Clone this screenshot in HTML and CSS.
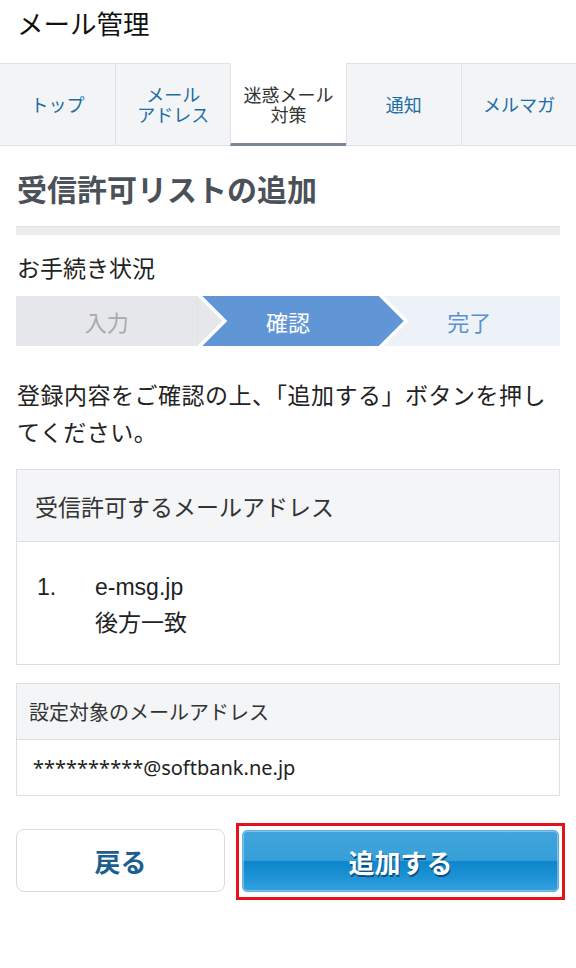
FILE: index.html
```html
<!DOCTYPE html>
<html lang="ja">
<head>
<meta charset="utf-8">
<title>メール管理</title>
<link rel="stylesheet" href="styles.css">
</head>
<body>
<header class="page-title">メール管理</header>
<nav class="tabs">
  <a class="tab">トップ</a>
  <a class="tab">メール<br>アドレス</a>
  <a class="tab tab-active">迷惑メール<br>対策</a>
  <a class="tab">通知</a>
  <a class="tab">メルマガ</a>
</nav>
<main class="content">
  <h1 class="heading">受信許可リストの追加</h1>
  <div class="divider"></div>
  <p class="status-label">お手続き状況</p>
  <div class="steps">
    <div class="step step-done"><span>入力</span></div>
    <div class="step step-current"><span>確認</span></div>
    <div class="step step-next"><span>完了</span></div>
  </div>
  <p class="lead">登録内容をご確認の上、「追加する」ボタンを押してください。</p>
  <section class="box">
    <div class="box-head">受信許可するメールアドレス</div>
    <div class="box-body list-body">
      <div class="entry">
        <span class="entry-num">1.</span>
        <div class="entry-text">
          <div>e-msg.jp</div>
          <div>後方一致</div>
        </div>
      </div>
    </div>
  </section>
  <section class="box box-small">
    <div class="box-head">設定対象のメールアドレス</div>
    <div class="box-body address">**********@softbank.ne.jp</div>
  </section>
  <div class="actions">
    <button class="btn-back">戻る</button>
    <div class="highlight">
      <button class="btn-add">追加する</button>
    </div>
  </div>
</main>
</body>
</html>
```

FILE: styles.css
```css
* { box-sizing: border-box; }
html, body { margin: 0; padding: 0; background: #fff; }
body {
  font-family: "Liberation Sans", "Noto Sans CJK JP", sans-serif;
  color: #222;
  width: 576px;
}
.page-title {
  height: 63px;
  padding: 8px 17px 0;
  font-size: 26.5px;
  line-height: 34px;
  color: #111;
}
.tabs {
  display: grid;
  grid-template-columns: repeat(5, 1fr);
  height: 83px;
}
.tab {
  display: flex;
  align-items: center;
  justify-content: center;
  text-align: center;
  height: 83px;
  background: #f3f4f6;
  border-top: 1px solid #dfe1e4;
  border-bottom: 1px solid #dfe1e4;
  border-left: 1px solid #dfe1e4;
  font-size: 18px;
  line-height: 20px;
  color: #1d6da6;
  padding-top: 2px;
}
.tab:first-child { border-left: none; }
.tab-active {
  background: #fff;
  border-top-color: #fff;
  border-bottom: 3px solid #7b8795;
  color: #333;
  padding-top: 4px;
}
.content { padding: 0 16px; }
.heading {
  margin: 25px 0 0;
  font-size: 30px;
  line-height: 40px;
  font-weight: bold;
  color: #4b5159;
  padding-left: 1px;
}
.divider {
  margin-top: 15px;
  height: 9px;
  background: #ededed;
  border-top: 1px solid #e2e2e2;
}
.status-label {
  margin: 19px 0 0;
  font-size: 23px;
  line-height: 30px;
  color: #222;
  padding-left: 1px;
}
.steps {
  margin-top: 12px;
  display: grid;
  grid-template-columns: repeat(3, 1fr);
  height: 50px;
}
.step {
  position: relative;
  display: flex;
  align-items: center;
  justify-content: center;
  font-size: 22px;
}
.step::before, .step::after {
  content: "";
  position: absolute;
  top: 0;
  left: 100%;
  height: 50px;
}
.step::before {
  width: 30px;
  background: #fff;
  clip-path: polygon(0 0, 5px 0, 30px 25px, 5px 50px, 0 50px);
}
.step::after {
  width: 25px;
  clip-path: polygon(0 0, 25px 25px, 0 50px);
}
.step-done {
  z-index: 3;
  background: #e6e7ea;
  color: #a8aaad;
}
.step-done::after { background: #e6e7ea; }
.step-current {
  z-index: 2;
  background: #6196d6;
  color: #fff;
}
.step-current::after { background: #6196d6; }
.step-next {
  z-index: 1;
  background: #edf2f9;
  color: #5c8fd0;
}
.step-next::before, .step-next::after { display: none; }
.lead {
  margin: 32px 0 0;
  font-size: 23px;
  letter-spacing: 0.5px;
  line-height: 37px;
  color: #222;
  padding-left: 1px;
}
.box {
  margin-top: 17px;
  border: 1px solid #dddfe2;
}
.box-head {
  background: #f4f5f7;
  border-bottom: 1px solid #dddfe2;
  height: 72px;
  display: flex;
  align-items: center;
  padding-left: 18px;
  font-size: 23px;
  color: #333;
}
.list-body {
  padding: 27px 0 23px 20px;
  font-size: 23px;
  line-height: 36px;
}
.entry { display: flex; }
.entry-num { width: 58px; }
.box-small { margin-top: 18px; }
.box-small .box-head {
  height: 56px;
  padding-left: 12px;
  font-size: 20px;
}
.address {
  height: 55px;
  display: flex;
  align-items: center;
  padding-left: 16px;
  font-family: "Noto Sans", "Noto Sans CJK JP", sans-serif;
  font-size: 20px;
  color: #222;
}
.actions {
  margin-top: 27px;
  display: flex;
  align-items: flex-start;
  margin-right: -5px;
}
.btn-back {
  margin-top: 6px;
  width: 209px;
  height: 63px;
  background: #fff;
  border: 1px solid #dcdcdc;
  border-radius: 8px;
  font-family: inherit;
  font-size: 26px;
  font-weight: bold;
  color: #1c5f8f;
  padding: 0;
}
.highlight {
  margin-left: 11px;
  flex: 1;
  border: 3px solid #e1141e;
  padding: 4px 3px 5px;
}
.btn-add {
  display: block;
  width: 100%;
  height: 62px;
  border: 1px solid #5fb1e2;
  border-radius: 5px;
  box-shadow: inset 0 0 0 1px rgba(255,255,255,0.35);
  background: linear-gradient(to bottom, #40a5db 0%, #379fd8 49%, #0d86cb 51%, #1c91d3 75%, #35a2df 100%);
  font-family: inherit;
  font-size: 26px;
  font-weight: bold;
  color: #fff;
  text-shadow: 1px 2px 0 #0b4f85;
  padding: 0;
}
```
